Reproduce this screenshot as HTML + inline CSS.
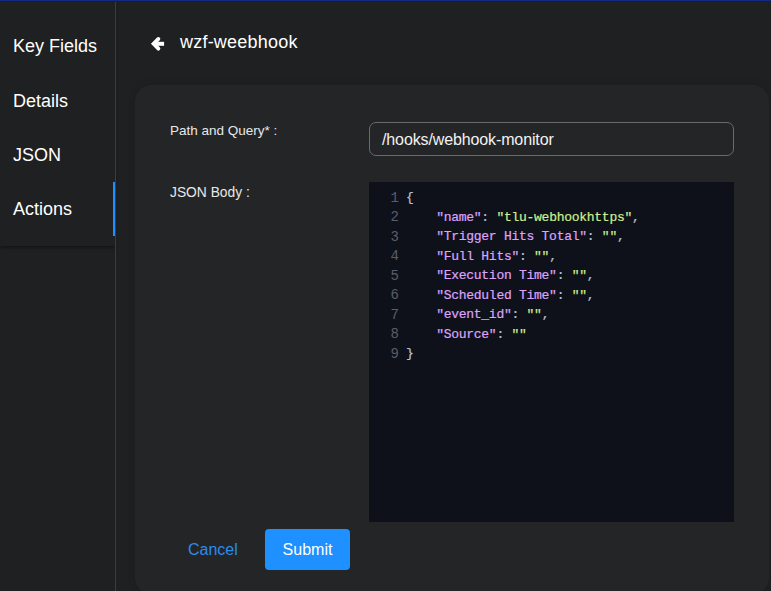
<!DOCTYPE html>
<html><head><meta charset="utf-8">
<style>
*{box-sizing:border-box;margin:0;padding:0}
html,body{width:771px;height:591px;overflow:hidden;background:#1f2022;font-family:"Liberation Sans",sans-serif;color:#fff}
.topbar{position:absolute;left:0;top:0;width:771px;height:1px;background:#112b84;box-shadow:0 1px 0 #1f1e1c;z-index:5}
.side{position:absolute;left:0;top:2px;width:115px;height:589px;background:#1f2022}
.sideline{position:absolute;left:115px;top:1px;width:1px;height:590px;background:#3b3c3e}
.menu{position:absolute;left:0;top:1px;width:115px;height:245px;background:#1f2022;box-shadow:0 2px 3px rgba(0,0,0,.35)}
.mi{position:absolute;left:13px;font-size:18px;color:#fff;line-height:20px}
.active{position:absolute;left:113px;top:182px;width:2px;height:54px;background:#1e90ff}
.back{position:absolute;left:140px;top:30px}
.title{position:absolute;left:180px;top:32px;font-size:18px;line-height:20px;color:#fff;letter-spacing:0.22px}
.card{position:absolute;left:135px;top:85px;width:634px;height:509px;background:#242527;border-radius:16px;box-shadow:0 0 10px rgba(0,0,0,.12)}
.lbl{position:absolute;left:170px;font-size:13.5px;color:#e8e8e8;line-height:16px}
.input{position:absolute;left:369px;top:122px;width:365px;height:34px;border:1px solid #6a6b6d;border-radius:7px;background:#242527}
.input span{position:absolute;left:12px;top:8px;font-size:16px;line-height:18px;color:#f2f2f2;letter-spacing:-0.12px}
.editor{position:absolute;left:369px;top:182px;width:365px;height:340px;background:#0f111a}
.code{position:absolute;left:0;top:6px;font-family:"Liberation Mono",monospace;font-size:13px;line-height:19.5px;white-space:pre;letter-spacing:-0.27px;-webkit-text-stroke:0.2px}
.ln{position:absolute;left:0;width:30px;text-align:right;color:#575e6c;letter-spacing:0;font-size:14px;-webkit-text-stroke:0;margin-top:0.6px}
.cl{position:absolute;left:37px;color:#b8c2d0}
.k{color:#dca4fb}
.s{color:#cdef8e}
.p{color:#c9d1d9}
.cancel{position:absolute;left:188px;top:541px;font-size:16px;line-height:18px;color:#2a8cf0}
.submit{position:absolute;left:265px;top:529px;width:85px;height:41px;background:#1e90ff;border-radius:4px;font-size:16px;color:#fff;text-align:center;line-height:41px}
</style></head><body>
<div class="topbar"></div>
<div class="side"></div>
<div class="menu">
  <div class="mi" style="top:35px">Key Fields</div>
  <div class="mi" style="top:90px">Details</div>
  <div class="mi" style="top:144px">JSON</div>
  <div class="mi" style="top:198px">Actions</div>
</div>
<div class="sideline"></div>
<div class="active"></div>
<svg class="back" width="40" height="30" viewBox="140 30 40 30"><path d="M158.4 38.9 L153.6 43.8 L158.4 48.7" stroke="#fff" stroke-width="3.8" fill="none" stroke-linecap="round" stroke-linejoin="miter"/><path d="M154 43.8 H164.1" stroke="#fff" stroke-width="4" fill="none"/></svg>
<div class="title">wzf-weebhook</div>
<div class="card"></div>
<div class="lbl" style="top:123px">Path and Query* :</div>
<div class="input"><span>/hooks/webhook-monitor</span></div>
<div class="lbl" style="top:185px;font-size:13.8px">JSON Body :</div>
<div class="editor">
 <div class="code">
  <div class="ln" style="top:0px">1</div><div class="cl" style="top:0px">{</div>
  <div class="ln" style="top:19.5px">2</div><div class="cl" style="top:19.5px">    <span class="k">"name"</span>: <span class="s">"tlu-webhookhttps"</span>,</div>
  <div class="ln" style="top:39px">3</div><div class="cl" style="top:39px">    <span class="k">"Trigger Hits Total"</span>: <span class="s">""</span>,</div>
  <div class="ln" style="top:58.5px">4</div><div class="cl" style="top:58.5px">    <span class="k">"Full Hits"</span>: <span class="s">""</span>,</div>
  <div class="ln" style="top:78px">5</div><div class="cl" style="top:78px">    <span class="k">"Execution Time"</span>: <span class="s">""</span>,</div>
  <div class="ln" style="top:97.5px">6</div><div class="cl" style="top:97.5px">    <span class="k">"Scheduled Time"</span>: <span class="s">""</span>,</div>
  <div class="ln" style="top:117px">7</div><div class="cl" style="top:117px">    <span class="k">"event_id"</span>: <span class="s">""</span>,</div>
  <div class="ln" style="top:136.5px">8</div><div class="cl" style="top:136.5px">    <span class="k">"Source"</span>: <span class="s">""</span></div>
  <div class="ln" style="top:156px">9</div><div class="cl" style="top:156px">}</div>
 </div>
</div>
<div class="cancel">Cancel</div>
<div class="submit">Submit</div>
</body></html>
